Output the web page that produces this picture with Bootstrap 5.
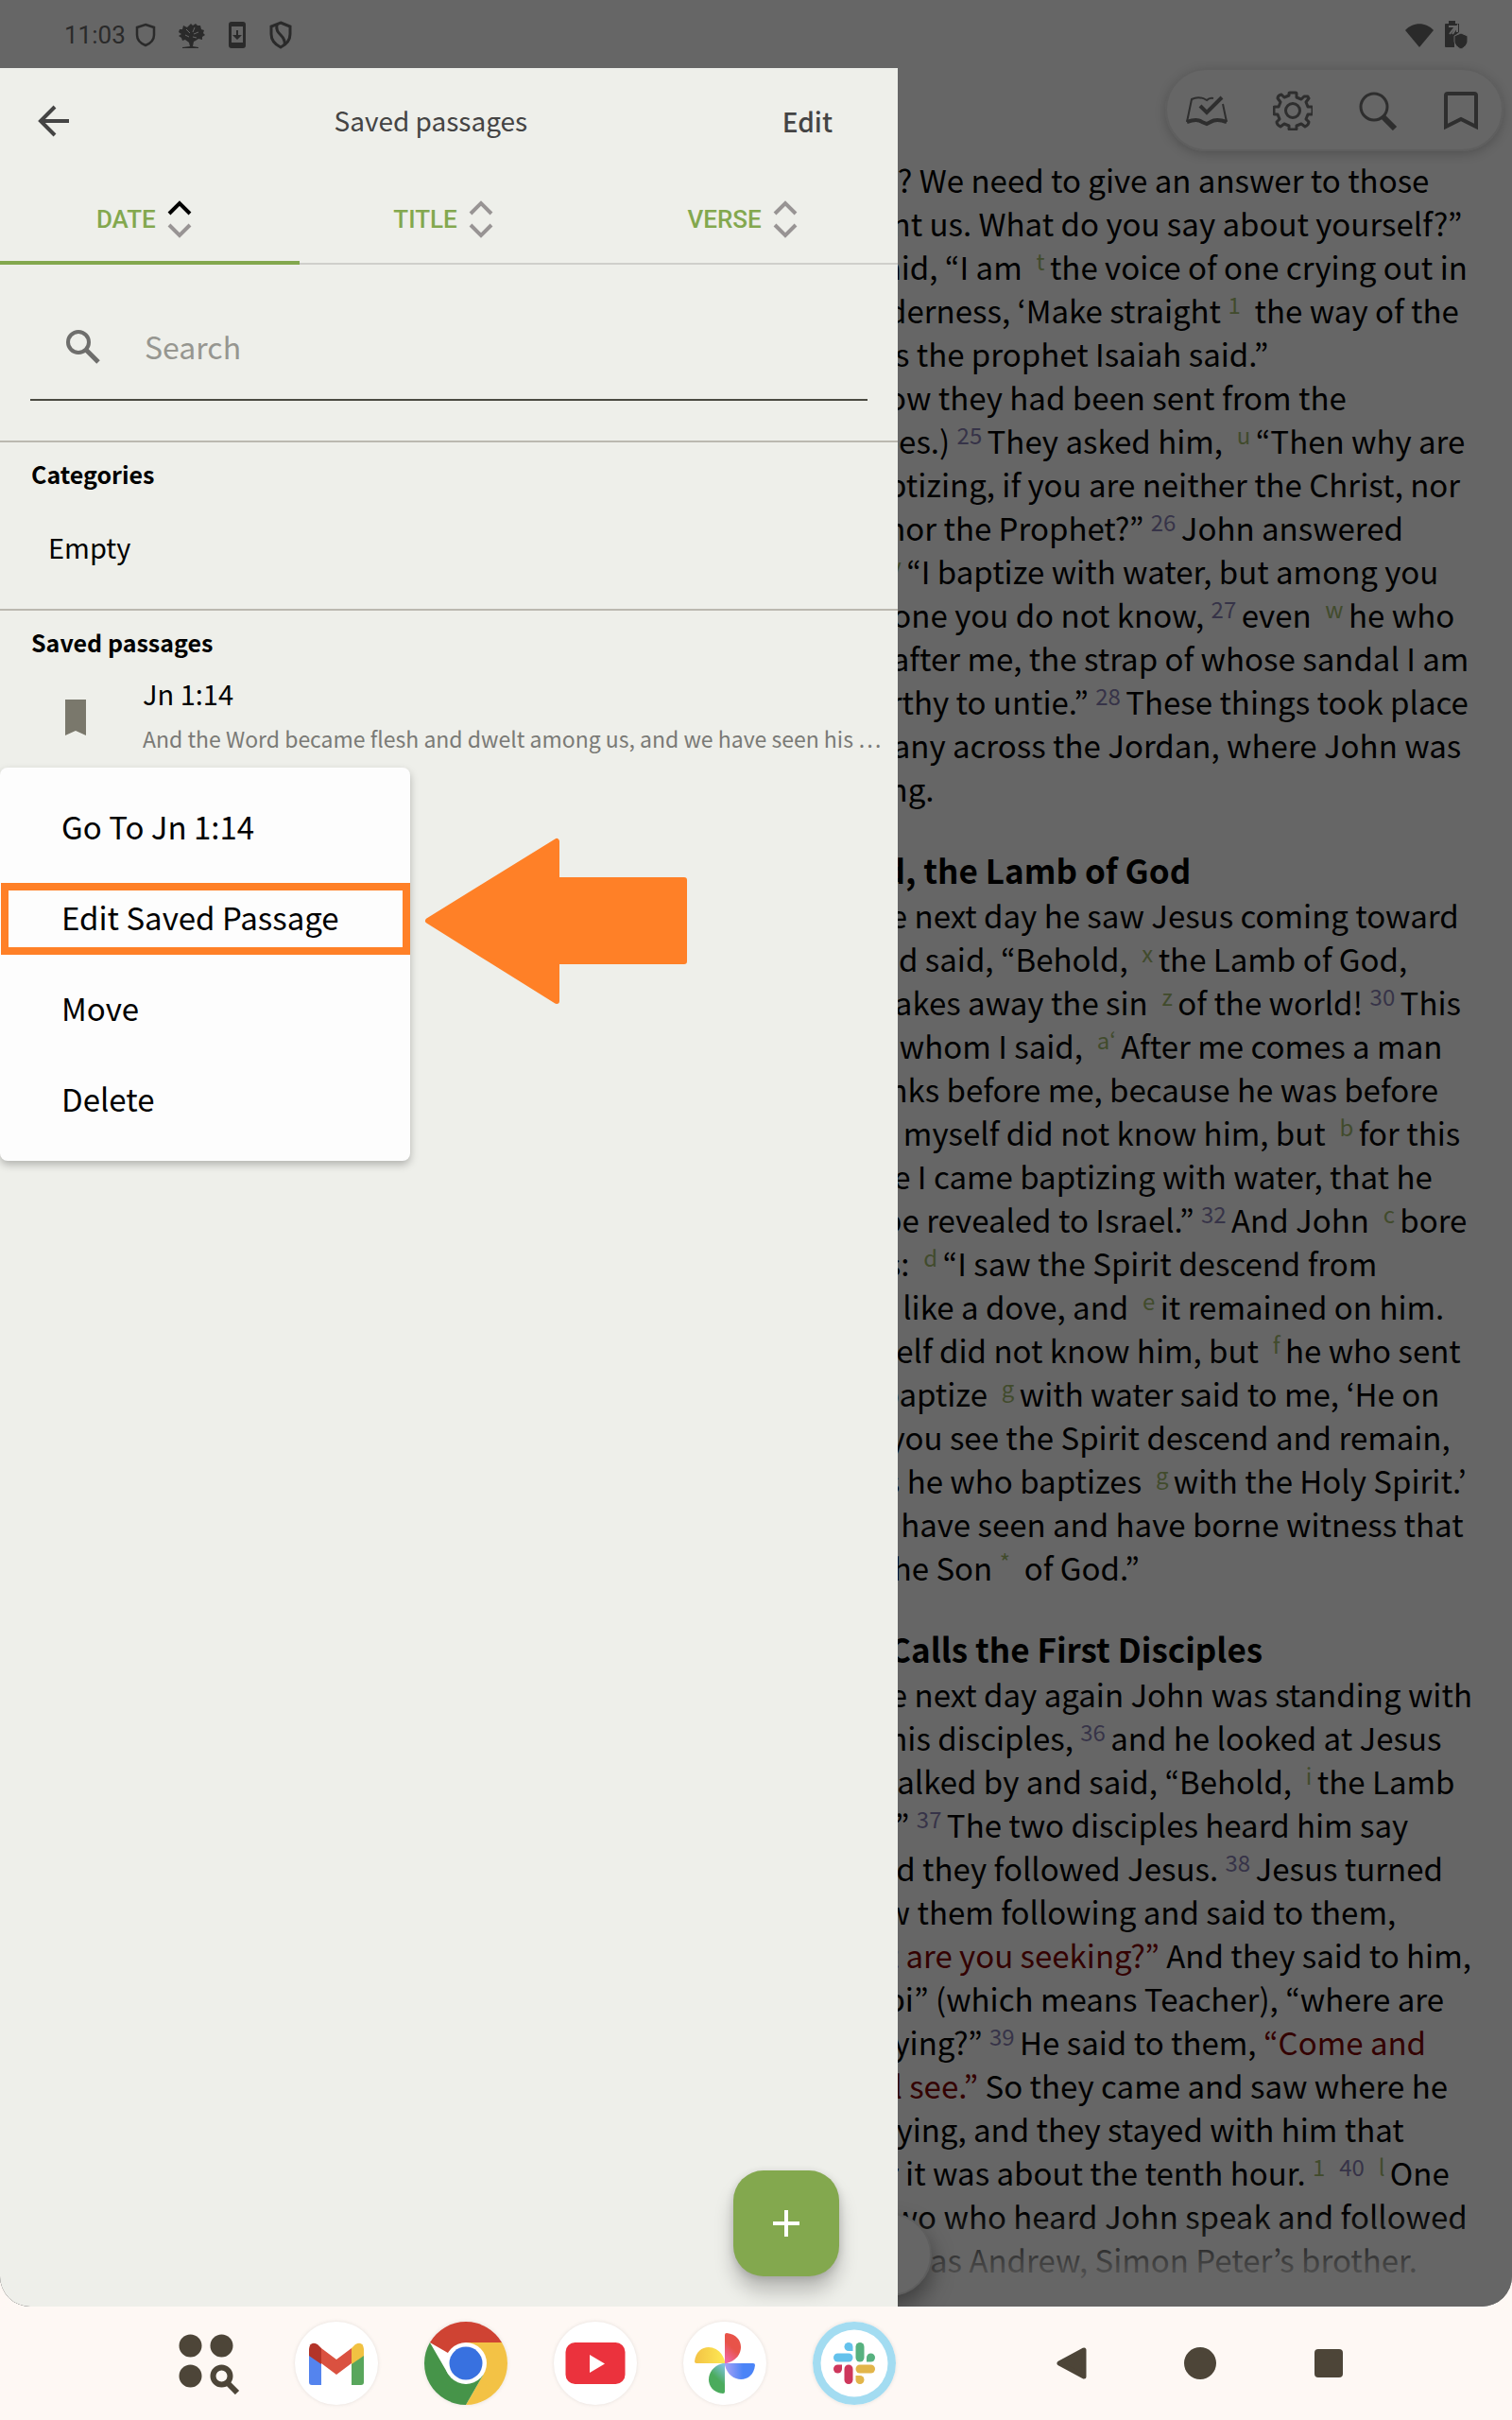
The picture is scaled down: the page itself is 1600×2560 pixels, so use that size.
<!DOCTYPE html>
<html lang="en">
<head>
<meta charset="utf-8">
<meta name="viewport" content="width=device-width, initial-scale=1">
<title>Saved passages</title>
<link rel="stylesheet" href="https://cdn.jsdelivr.net/npm/bootstrap@5.3.0/dist/css/bootstrap.min.css">
<style>
  :root { --dim: #666; --panel: #eeefea; --leaf: #83a84e; --ink: #444; --dock: #fef8f4; --mark: #ff8027; }
  body { font-family: "Noto Sans CJK KR", "Noto Sans", sans-serif; background: var(--dock); color: #000; }
  svg { display: block; flex: none; }
  .stage { background: var(--dim); border-radius: 0 0 32px 32px; overflow: hidden; }

  .status { height: 72px; padding: 2px 46px 0 68px; color: #2a2a2a; font-family: Roboto, sans-serif; font-size: 26px; }
  .status-left { gap: 23px; }
  .clock { gap: 10px; }
  .status-right { gap: 10px; }
  .tools { height: 88px; width: 358px; margin-right: 9px; border-radius: 44px; padding: 2px 24px 0 20px; border: 2px solid #5f5f5f; box-shadow: 0 3px 12px rgba(0,0,0,.2); }

  .reader { padding: 7px 0 20px 836px; font-size: 33px; line-height: 46px; }
  .reader p { margin: 0; }
  .reader .para { text-indent: 34px; }
  .reader h2 { font-size: 35px; line-height: 46px; font-weight: 700; margin: 40px 0 2px; }
  .reader sup { font-size: 24px; line-height: 0; vertical-align: 10px; top: 0; }
  .vs { color: #363348; }
  .fn { color: #414b2c; }
  .red { color: #330000; }
  .fade-out { height: 100px; background: linear-gradient(rgba(102,102,102,0), #666 85%); }
  .round-nav { left: 898px; bottom: 11px; width: 88px; height: 88px; background: #666; border: 2px solid #5e5e5e; box-shadow: 0 12px 24px rgba(0,0,0,.4); }

  .drawer { top: 72px; bottom: 0; left: 0; width: 950px; background: var(--panel); }
  .drawer-head { height: 112px; padding: 0 69px 0 40px; color: var(--ink); font-size: 28px; }
  .drawer-head h1 { font-size: 28px; font-weight: 400; margin: 0; padding-left: 10px; }
  .edit-btn { font-weight: 500; font-size: 28px; color: var(--ink); }
  .sort-tabs { height: 96px; border-bottom: 2px solid #cfcfcb; }
  .sort-tabs .btn { color: var(--leaf); font-family: Roboto, sans-serif; font-weight: 500; font-size: 26px; gap: 12px; padding: 4px 12px 0 0; margin-bottom: -2px; border: 0 solid transparent; border-bottom-width: 4px; }
  .sort-tabs .btn.active { color: var(--leaf); border-bottom-color: var(--leaf); }
  .search-row { margin: 30px 32px 42px; height: 114px; padding-left: 34px; gap: 41px; border-bottom: 2px solid #4a4a42; }
  .search-row input { font-size: 32px; color: #000; }
  .search-row input::placeholder { color: #969690; opacity: 1; }
  .block { border-top: 2px solid #bbb8b0; padding: 16px 0 0 33px; }
  .block h2 { font-size: 25px; line-height: 34px; font-weight: 700; margin: 0; }
  .empty-row { font-size: 29px; line-height: 40px; padding: 40px 0 46px 18px; }
  .passage { padding: 16px 0 0 36px; gap: 60px; }
  .passage-title { font-size: 29px; line-height: 42px; }
  .passage-text { font-size: 23px; line-height: 34px; color: #7a7a76; margin-top: 10px; }

  .popmenu { top: 740px; left: 0; width: 434px; padding: 16px 0; background: #fdfdfd; border-radius: 8px; box-shadow: 0 4px 8px rgba(0,0,0,.25); }
  .popmenu .btn { height: 96px; padding: 0 65px 2px; font-size: 33px; text-align: left; color: #000; }
  .popmenu .picked::before { content: ""; position: absolute; inset: 10px 0 10px 1px; border: 8px solid var(--mark); }
  .pointer { top: 814px; left: 449px; }
  .fab { right: 62px; bottom: 32px; width: 112px; height: 112px; border-radius: 32px; background: var(--leaf); box-shadow: 0 16px 20px rgba(0,0,0,.22), 0 2px 8px rgba(0,0,0,.15); }

  .dock { height: 120px; padding: 0 177px 0 189px; }
  .dock-apps { gap: 49px; }
  .dock-apps button { width: 88px; height: 88px; border-radius: 50%; background: #fff; box-shadow: 0 0 4px rgba(0,0,0,.1); }
  .dock-apps .finder { width: 74px; background: none; box-shadow: none; }
  .dock-nav { gap: 102px; }
</style>
</head>
<body class="d-flex flex-column min-vh-100">
<main class="stage position-relative flex-grow-1 d-flex flex-column">
  <header class="status d-flex align-items-center justify-content-between">
    <div class="status-left d-flex align-items-center">
      <span class="clock d-flex align-items-center">11:03
        <svg width="22" height="26" viewBox="0 0 22 26" fill="none" stroke="#2a2a2a" stroke-width="2.5"><path d="M11 2 20 5v8c0 5-4 9-9 11-5-2-9-6-9-11V5z"/></svg>
      </span>
      <svg width="30" height="28" viewBox="0 0 30 28" fill="#2a2a2a"><path d="m14 2 2 2 3-2 2 2 3 0 1 4 3 1-1 3 2 2-3 2 0 3-4-1-3 2-2 1-1 5 6 1v1H5v-1l8-1-1-4-4-3-3 1-1-3-3-2 3-2-3-2 1-3 3 0 1-4 4 2z"/><path d="m9 8 4 4M18 6l-2 5M22 11l-5 2M8 14l4 2M20 17l-4-1" stroke="#666"/></svg>
      <svg width="20" height="30" viewBox="0 0 20 30"><rect x="1" y="1" width="18" height="28" rx="3" fill="#2a2a2a"/><path d="M4 6h12v17H4z" fill="#666"/><path d="M9 10h2v5h4l-5 5-5-5h4z" fill="#2a2a2a"/></svg>
      <svg width="26" height="30" viewBox="0 0 26 30" fill="none" stroke="#2a2a2a" stroke-width="3"><path d="M13 2 23 6v8c0 6-4 11-10 14C7 25 3 20 3 14V6z"/><path d="M9 4c-1 6 1 8 4 11s5 6 4 10"/></svg>
    </div>
    <div class="status-right d-flex align-items-center">
      <svg width="32" height="26" viewBox="0 0 32 26" fill="#2a2a2a"><path d="M16 26 1 8C9-1 23-1 31 8z"/></svg>
      <svg width="26" height="30" viewBox="0 0 26 30" fill="#2a2a2a"><path d="M1 4q0-1 1-1h3V0h7v3h4v9l-5 4v12H2q-1 0-1-1z"/><path d="M5 6h7L6 14M9 14l5-8v6" stroke="#666" fill="none" stroke-width="2"/><path d="m18 13 7 3v5c0 4-3 7-7 9-4-2-7-5-7-9v-5z" stroke="#666" stroke-width="1"/></svg>
    </div>
  </header>

  <nav class="tools align-self-end d-flex align-items-center justify-content-between" aria-label="Reader tools">
    <button class="btn p-0 border-0" aria-label="Reading plans"><svg width="44" height="34" viewBox="0 0 44 34" fill="none" stroke="#2e2e2e" stroke-width="2"><path d="M29 4q-4-1-7 2Q14 1 6 5L1 29M43 29 39 10"/><path d="M1 29q11-4 16 0l5 2 4-2q6-4 17 0" stroke-width="4"/><path d="m15 12 7 7L38 3" stroke-width="4"/></svg></button>
    <button class="btn p-0 border-0" aria-label="Settings"><svg width="42" height="42" viewBox="0 0 42 42" fill="none" stroke="#2e2e2e" stroke-width="3" stroke-linejoin="round"><circle cx="21" cy="21" r="7.500"/><path d="M18 2h6q1 0 1 1v4l5 2 3-3 4 0 0 0-1 0q1 0 2 2l-3 4 2 5h4q1 0 1 1v6q0 1-1 1h-4l-2 5 3 3q0 3-4 5l-4-3-5 2v3q0 1-1 1h-6q-1 0-1-1v-3l-5-2-4 3q-4-2-4-5l3-3-2-5H2q-1 0-1-1v-6q0-1 1-1h4l2-5-3-4q0-3 4-4l3 3 5-2V3q0-1 1-1z"/></svg></button>
    <button class="btn p-0 border-0" aria-label="Find"><svg width="42" height="42" viewBox="0 0 42 42" fill="none" stroke="#2e2e2e"><circle cx="17" cy="17" r="14" stroke-width="3"/><path d="m26 27 13 13" stroke-width="6"/></svg></button>
    <button class="btn p-0 border-0" aria-label="Bookmarks"><svg width="38" height="42" viewBox="0 0 38 42" fill="none" stroke="#2e2e2e" stroke-width="4"><path d="M3 5q0-2 2-2h28q2 0 2 2v33l-16-8-16 8z"/></svg></button>
  </nav>

  <article class="reader text-nowrap flex-grow-1">
    <p>are you? We need to give an answer to those<br>
    who sent us. What do you say about yourself?”<br>
    <sup class="vs">23</sup> He said, “I am &nbsp;<sup class="fn">t </sup>the voice of one crying out in<br>
    the wilderness, ‘Make straight <sup class="fn">1</sup>&nbsp; the way of the<br>
    Lord,’ as the prophet Isaiah said.”</p>
    <p class="para"><sup class="vs">24</sup> (Now they had been sent from the<br>
    Pharisees.) <sup class="vs">25 </sup>They asked him, &nbsp;<sup class="fn">u </sup>“Then why are<br>
    you baptizing, if you are neither the Christ, nor<br>
    Elijah, nor the Prophet?” <sup class="vs">26 </sup>John answered<br>
    them, &nbsp;<sup class="fn">v </sup>“I baptize with water, but among you<br>
    stands one you do not know, <sup class="vs">27 </sup>even &nbsp;<sup class="fn">w </sup>he who<br>
    comes after me, the strap of whose sandal I am<br>
    not worthy to untie.” <sup class="vs">28 </sup>These things took place<br>
    in Bethany across the Jordan, where John was<br>
    baptizing.</p>
    <h2>Behold, the Lamb of God</h2>
    <p class="para"><sup class="vs">29 </sup>The next day he saw Jesus coming toward<br>
    him, and said, “Behold, &nbsp;<sup class="fn">x </sup>the Lamb of God,<br>
    &nbsp;<sup class="fn">y </sup>who takes away the sin &nbsp;<sup class="fn">z </sup>of the world! <sup class="vs">30 </sup>This<br>
    is he of whom I said, &nbsp;<sup class="fn">a‘ </sup>After me comes a man<br>
    who ranks before me, because he was before<br>
    me.’ <sup class="vs">31 </sup>I myself did not know him, but &nbsp;<sup class="fn">b </sup>for this<br>
    purpose I came baptizing with water, that he<br>
    might be revealed to Israel.” <sup class="vs">32 </sup>And John &nbsp;<sup class="fn">c </sup>bore<br>
    witness: &nbsp;<sup class="fn">d </sup>“I saw the Spirit descend from<br>
    heaven like a dove, and &nbsp;<sup class="fn">e </sup>it remained on him.<br>
    <sup class="vs">33 </sup>I myself did not know him, but &nbsp;<sup class="fn">f </sup>he who sent<br>
    me to baptize &nbsp;<sup class="fn">g </sup>with water said to me, ‘He on<br>
    whom you see the Spirit descend and remain,<br>
    &nbsp;<sup class="fn">h </sup>this is he who baptizes &nbsp;<sup class="fn">g </sup>with the Holy Spirit.’<br>
    <sup class="vs">34 </sup>And I have seen and have borne witness that<br>
    this is the Son <sup class="fn">*</sup>&nbsp; of God.”</p>
    <h2>Jesus Calls the First Disciples</h2>
    <p class="para"><sup class="vs">35 </sup>The next day again John was standing with<br>
    two of his disciples, <sup class="vs">36 </sup>and he looked at Jesus<br>
    as he walked by and said, “Behold, &nbsp;<sup class="fn">i </sup>the Lamb<br>
    of God!” <sup class="vs">37 </sup>The two disciples heard him say<br>
    this, and they followed Jesus. <sup class="vs">38 </sup>Jesus turned<br>
    and saw them following and said to them,<br>
    &nbsp;<sup class="fn">j </sup><span class="red">“What are you seeking?”</span> And they said to him,<br>
    &nbsp;<sup class="fn">k </sup>“Rabbi” (which means Teacher), “where are<br>
    you staying?” <sup class="vs">39 </sup>He said to them, <span class="red">“Come and</span><br>
    <span class="red">you will see.”</span> So they came and saw where he<br>
    was staying, and they stayed with him that<br>
    day, for it was about the tenth hour. <sup class="fn">1</sup>&nbsp; <sup class="vs">40</sup> &nbsp;<sup class="fn">l </sup>One<br>
    of the two who heard John speak and followed<br>
    <sup class="fn">m </sup>Jesus was Andrew, Simon Peter’s brother.</p>
  </article>
  <div class="fade-out position-absolute bottom-0 start-0 end-0"></div>
  <button class="round-nav btn p-0 rounded-circle position-absolute d-flex align-items-center justify-content-center" aria-label="Next chapter"><svg width="28" height="28" viewBox="0 0 28 28" fill="none" stroke="#000" stroke-width="4"><path d="m4 8 11 10-11 9"/></svg></button>

  <aside class="drawer position-absolute d-flex flex-column" aria-label="Saved passages">
    <div class="drawer-head d-flex align-items-center justify-content-between">
      <button class="btn p-0 border-0" aria-label="Back"><svg width="34" height="34" viewBox="0 0 34 34" fill="none" stroke="#444" stroke-width="4"><path d="M33 17H4M18 2 3 17l15 15"/></svg></button>
      <h1>Saved passages</h1>
      <button class="edit-btn btn p-0 border-0">Edit</button>
    </div>
    <div class="sort-tabs d-flex" role="tablist">
      <button class="active btn rounded-0 w-100 d-flex align-items-center justify-content-center" role="tab" aria-selected="true">DATE
        <svg width="26" height="40" viewBox="0 0 26 40" fill="none" stroke-width="4"><path d="M2 14 13 3l11 11" stroke="#000"/><path d="m2 26 11 11 11-11" stroke="#989494"/></svg></button>
      <button class="btn rounded-0 w-100 d-flex align-items-center justify-content-center" role="tab" aria-selected="false">TITLE
        <svg width="26" height="40" viewBox="0 0 26 40" fill="none" stroke="#989494" stroke-width="4"><path d="M2 14 13 3l11 11M2 26l11 11 11-11"/></svg></button>
      <button class="btn rounded-0 w-100 d-flex align-items-center justify-content-center" role="tab" aria-selected="false">VERSE
        <svg width="26" height="40" viewBox="0 0 26 40" fill="none" stroke="#989494" stroke-width="4"><path d="M2 14 13 3l11 11M2 26l11 11 11-11"/></svg></button>
    </div>
    <label class="search-row d-flex align-items-center">
      <svg width="46" height="46" viewBox="0 0 46 46" fill="none" stroke="#6e6e6c"><circle cx="17" cy="19" r="11" stroke-width="4"/><path d="m25 27 13 13" stroke-width="5"/></svg>
      <input class="form-control border-0 bg-transparent p-0 shadow-none" type="search" placeholder="Search" aria-label="Search">
    </label>
    <section class="block">
      <h2>Categories</h2>
      <div class="empty-row">Empty</div>
    </section>
    <section class="block">
      <h2>Saved passages</h2>
      <div class="passage d-flex align-items-center">
        <svg class="mt-2" width="22" height="38" viewBox="0 0 22 38"><path d="M0 0h22v38l-11-5-11 5z" fill="#7a786c"/></svg>
        <div class="flex-fill overflow-hidden">
          <div class="passage-title">Jn 1:14</div>
          <div class="passage-text text-truncate">And the Word became flesh and dwelt among us, and we have seen his …</div>
        </div>
      </div>
    </section>

    <div class="popmenu position-absolute d-flex flex-column" role="menu">
      <button class="btn border-0 rounded-0" role="menuitem">Go To Jn 1:14</button>
      <button class="picked btn border-0 rounded-0 position-relative" role="menuitem">Edit Saved Passage</button>
      <button class="btn border-0 rounded-0" role="menuitem">Move</button>
      <button class="btn border-0 rounded-0" role="menuitem">Delete</button>
    </div>
    <svg class="pointer position-absolute" width="280" height="178" viewBox="0 0 280 178"><path d="M4 88 140 4v41h135v86H140v42z" fill="#ff8027" stroke="#ff8027" stroke-width="6" stroke-linejoin="round"/></svg>
    <button class="fab btn border-0 p-0 position-absolute d-flex align-items-center justify-content-center" aria-label="Add"><svg width="28" height="28" viewBox="0 0 28 28" stroke="#fff" stroke-width="4"><path d="M14 0v28M0 14h28"/></svg></button>
  </aside>
</main>

<footer class="dock d-flex align-items-center justify-content-between">
  <div class="dock-apps d-flex align-items-center">
    <button class="finder btn border-0 p-0" aria-label="All apps"><svg width="66" height="66" viewBox="0 0 66 66" fill="#4d4538"><circle cx="12.500" cy="14.500" r="12"/><circle cx="45.500" cy="14.500" r="12"/><circle cx="12.500" cy="46.500" r="12"/><circle cx="45.500" cy="46.500" r="9" fill="none" stroke="#4d4538" stroke-width="6"/><path d="m51 53 11 11" stroke="#4d4538" stroke-width="6"/></svg></button>
    <button class="btn border-0 p-0" aria-label="Mail"><svg width="88" height="88" viewBox="0 0 88 88"><path d="M15 34v30q0 3 3 3h10V42z" fill="#5484ee"/><path d="M73 34v30q0 3-3 3H60V42z" fill="#59a65c"/><path d="M28 44V28l16 12 16-12v16L44 56z" fill="#da5140"/><path d="M15 36v-7q1-9 9-5l4 4v17z" fill="#b33429"/><path d="M73 36v-7q-1-9-9-5l-4 4v17z" fill="#f1c142"/></svg></button>
    <button class="btn border-0 p-0" aria-label="Chrome"><svg width="88" height="88" viewBox="0 0 88 88"><path d="M44 44 5.900 22A44 44 0 0 1 82.100 22z" fill="#cf4333"/><path d="M44 22h38.100A44 44 0 0 1 44 88l19-33z" fill="#f3c245"/><path d="M25 55 5.900 22A44 44 0 0 0 44 88l19-33-19 11z" fill="#469449"/><circle cx="44" cy="44" r="22" fill="#fff"/><circle cx="44" cy="44" r="17.500" fill="#3871e0"/></svg></button>
    <button class="btn border-0 p-0" aria-label="YouTube"><svg width="88" height="88" viewBox="0 0 88 88"><rect x="12.500" y="22" width="63" height="44" rx="10" fill="#eb323d"/><path d="M38 35v19l16-9.500z" fill="#fff"/></svg></button>
    <button class="btn border-0 p-0" aria-label="Photos"><svg width="88" height="88" viewBox="0 0 88 88"><defs><linearGradient id="gr" x1="0" y1="1" x2=".5" y2="0"><stop stop-color="#f26bb8"/><stop offset=".6" stop-color="#e85349"/></linearGradient><linearGradient id="gb"><stop stop-color="#a9a2f5"/><stop offset=".6" stop-color="#4b84f7"/></linearGradient><linearGradient id="gg" x1="1" y1="0" x2=".5" y2="1"><stop stop-color="#86c5f0"/><stop offset=".6" stop-color="#4bab5d"/></linearGradient><linearGradient id="gy"><stop stop-color="#f3c245"/><stop offset="1" stop-color="#fde953"/></linearGradient></defs><path d="M44 44V14q0-2 2-2c20 2 20 27 0 32z" fill="url(#gr)"/><path d="M44 44h30q2 0 2 2c-2 20-27 20-32 0z" fill="url(#gb)"/><path d="M44 44v30q0 2-2 2c-20-2-20-27 0-32z" fill="url(#gg)"/><path d="M44 44H14q-2 0-2-2c2-20 27-20 32 0z" fill="url(#gy)"/></svg></button>
    <button class="btn border-0 p-0" aria-label="Slack"><svg width="88" height="88" viewBox="0 0 88 88"><circle cx="44" cy="44" r="44" fill="#a3dcf1"/><circle cx="44" cy="44" r="35.500" fill="#fff"/><g stroke-width="9" stroke-linecap="round"><path d="M26.500 38H38" stroke="#64c2ec"/><path d="M50 26.500V38" stroke="#57b17f"/><path d="M50 50h11.500" stroke="#e2b54a"/><path d="M38 50v11.500" stroke="#ce375c"/></g><path d="M42.500 31H38a4.500 4.500 0 1 1 4.500-4.500z" fill="#64c2ec"/><path d="M57 42.500V38a4.500 4.500 0 1 1 4.500 4.500z" fill="#57b17f"/><path d="M45.500 57H50a4.500 4.500 0 1 1-4.500 4.500z" fill="#e2b54a"/><path d="M31 45.500V50a4.500 4.500 0 1 1-4.500-4.500z" fill="#ce375c"/></svg></button>
  </div>
  <div class="dock-nav d-flex align-items-center">
    <button class="btn border-0 p-0" aria-label="Back"><svg width="34" height="36" viewBox="0 0 34 36"><path d="M30 4v28L4 18z" fill="#4d4538" stroke="#4d4538" stroke-width="5" stroke-linejoin="round"/></svg></button>
    <button class="btn border-0 p-0" aria-label="Home"><svg width="34" height="34" viewBox="0 0 34 34"><circle cx="17" cy="17" r="17" fill="#4d4538"/></svg></button>
    <button class="btn border-0 p-0" aria-label="Recent apps"><svg width="34" height="34" viewBox="0 0 34 34"><rect x="2" y="2" width="30" height="30" rx="4" fill="#4d4538"/></svg></button>
  </div>
</footer>
<script src="https://cdn.jsdelivr.net/npm/bootstrap@5.3.0/dist/js/bootstrap.bundle.min.js"></script>
</body>
</html>
